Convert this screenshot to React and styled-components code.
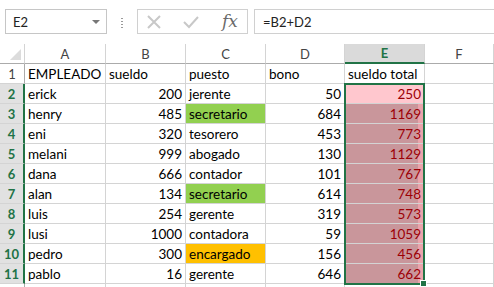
import React from 'react'
import styled, { createGlobalStyle } from 'styled-components'

const GlobalStyle = createGlobalStyle`
  body {
    margin: 0;
    background: #fff;
    font-family: Lato, "Liberation Sans", sans-serif;
    overflow: hidden;
  }
`

const Page = styled.div`
  width: 494px;
  height: 287px;
  overflow: hidden;
  background: #fff;
`

const FormulaBar = styled.div`
  display: flex;
  align-items: flex-start;
  height: 44px;
  padding-top: 9px;
  box-sizing: border-box;
`

const NameBox = styled.div`
  display: flex;
  align-items: center;
  justify-content: space-between;
  width: 102px;
  height: 25px;
  margin-left: 5px;
  padding: 0 6px 0 7px;
  box-sizing: border-box;
  border: 1px solid #c6c6c6;
  font-size: 13px;
  color: #222;
`

const Caret = styled.span`
  width: 0;
  height: 0;
  border-left: 4px solid transparent;
  border-right: 4px solid transparent;
  border-top: 4px solid #777;
`

const Grip = styled.div`
  width: 2px;
  height: 12px;
  margin: 8px 14px 0 14px;
  background: radial-gradient(circle, #9a9a9a 0.8px, transparent 1px) 0 0 / 2px 3px;
`

const FxButtons = styled.div`
  display: flex;
  align-items: center;
  gap: 20px;
  width: 111px;
  height: 25px;
  box-sizing: border-box;
  border: 1px solid #d0d0d0;
  padding: 0 0 0 8px;
`

const Fx = styled.span`
  font-family: "DejaVu Serif", "Liberation Serif", serif;
  font-style: italic;
  font-size: 17px;
  color: #6a6a6a;
  margin: -2px 0 0 2px;
`

const FormulaInput = styled.div`
  flex: 1;
  height: 25px;
  margin-left: 6px;
  box-sizing: border-box;
  border: 1px solid #d0d0d0;
  border-right: none;
  padding-left: 8px;
  display: flex;
  align-items: center;
  font-size: 13px;
  color: #222;
`

const Grid = styled.div`
  position: relative;
  display: grid;
  grid-template-columns: 25px 81px 80px 80px 79px 80px 1fr;
  grid-template-rows: 20px repeat(12, 20px);
`

const Corner = styled.div`
  border-right: 1px solid #d4d4d4;
  border-bottom: 1px solid #ababab;
  display: flex;
  align-items: flex-end;
  justify-content: flex-end;
  padding: 0 3px 3px 0;
  box-sizing: border-box;

  &::after {
    content: '';
    width: 0;
    height: 0;
    border-left: 11px solid transparent;
    border-bottom: 11px solid #dcdcdc;
  }
`

const ColHead = styled.div`
  display: flex;
  align-items: center;
  justify-content: center;
  font-size: 13px;
  box-sizing: border-box;
  color: ${p => (p.$active ? '#217346' : '#444')};
  font-weight: ${p => (p.$active ? 700 : 400)};
  background: ${p => (p.$active ? '#dadada' : '#fff')};
  border-right: 1px solid #d4d4d4;
  border-bottom: ${p => (p.$active ? '2px solid #217346' : '1px solid #ababab')};
`

const RowHead = styled.div`
  display: flex;
  align-items: center;
  justify-content: center;
  font-size: 13px;
  box-sizing: border-box;
  color: ${p => (p.$active ? '#217346' : '#444')};
  font-weight: ${p => (p.$active ? 700 : 400)};
  background: ${p => (p.$active ? '#e1e1e1' : '#fff')};
  border-bottom: 1px solid #d4d4d4;
  border-right: ${p => (p.$active ? '2px solid #217346' : '1px solid #ababab')};
`

const Cell = styled.div`
  display: flex;
  align-items: center;
  justify-content: ${p => (p.$num ? 'flex-end' : 'flex-start')};
  padding: 0 3px 0 3px;
  box-sizing: border-box;
  font-size: 13.5px;
  color: ${p => p.$color || '#000'};
  background: ${p => p.$bg || 'transparent'};
  border-right: 1px solid #d4d4d4;
  border-bottom: 1px solid #d4d4d4;
  white-space: nowrap;
  overflow: hidden;
`

const Selection = styled.div`
  position: absolute;
  grid-column: 6 / 7;
  grid-row: 3 / 13;
  top: -1px;
  left: -1px;
  right: 0;
  bottom: -1px;
  border: 2px solid #217346;
  pointer-events: none;

  &::after {
    content: '';
    position: absolute;
    right: -4px;
    bottom: -4px;
    width: 5px;
    height: 5px;
    background: #217346;
    border: 1px solid #fff;
  }
`

const rows = [
  ['erick', 200, 'jerente', 50],
  ['henry', 485, 'secretario', 684],
  ['eni', 320, 'tesorero', 453],
  ['melani', 999, 'abogado', 130],
  ['dana', 666, 'contador', 101],
  ['alan', 134, 'secretario', 614],
  ['luis', 254, 'gerente', 319],
  ['lusi', 1000, 'contadora', 59],
  ['pedro', 300, 'encargado', 156],
  ['pablo', 16, 'gerente', 646]
]

const jobFill = job => {
  if (job === 'secretario') return '#92d050'
  if (job === 'encargado') return '#ffc000'
  return undefined
}

const Cross = () => (
  <svg width='16' height='16' viewBox='0 0 16 16'>
    <path d='M2 2 L14 14 M14 2 L2 14' stroke='#c8c8c8' strokeWidth='2' fill='none' />
  </svg>
)

const Check = () => (
  <svg width='18' height='16' viewBox='0 0 18 16'>
    <path d='M2 8 L7 13 L16 3' stroke='#c8c8c8' strokeWidth='2' fill='none' />
  </svg>
)

const App = () => {
  const cols = ['A', 'B', 'C', 'D', 'E', 'F']

  return (
    <Page>
      <GlobalStyle />
      <FormulaBar>
        <NameBox>
          E2
          <Caret />
        </NameBox>
        <Grip />
        <FxButtons>
          <Cross />
          <Check />
          <Fx>fx</Fx>
        </FxButtons>
        <FormulaInput>=B2+D2</FormulaInput>
      </FormulaBar>

      <Grid>
        <Corner />
        {cols.map(c => (
          <ColHead key={c} $active={c === 'E'}>{c}</ColHead>
        ))}

        <RowHead>1</RowHead>
        <Cell>EMPLEADO</Cell>
        <Cell>sueldo</Cell>
        <Cell>puesto</Cell>
        <Cell>bono</Cell>
        <Cell>sueldo total</Cell>
        <Cell />

        {rows.map(([name, pay, job, bonus], i) => (
          <React.Fragment key={name + i}>
            <RowHead $active>{i + 2}</RowHead>
            <Cell>{name}</Cell>
            <Cell $num>{pay}</Cell>
            <Cell $bg={jobFill(job)}>{job}</Cell>
            <Cell $num>{bonus}</Cell>
            <Cell
              $num
              $color='#9c0006'
              $bg={i === 0 ? '#ffc7ce' : 'linear-gradient(to right, #c9969b calc(100% - 6px), #eba4ab 0)'}
            >
              {pay + bonus}
            </Cell>
            <Cell />
          </React.Fragment>
        ))}

        <RowHead />
        <Cell /><Cell /><Cell /><Cell /><Cell /><Cell />
        <Selection />
      </Grid>
    </Page>
  )
}

export default App
